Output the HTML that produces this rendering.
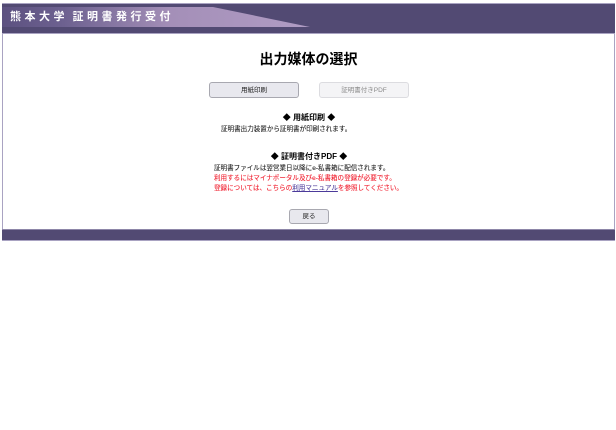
<!DOCTYPE html>
<html lang="ja">
<head>
<meta charset="utf-8">
<title>出力媒体の選択</title>
<style>
html,body{margin:0;padding:0;background:#fff;width:616px;height:430px;overflow:hidden}
body{font-family:"Liberation Sans","Noto Sans CJK JP",sans-serif;position:relative}
.a{position:absolute;white-space:nowrap}
.c{text-align:center}
.t{font-size:6.55px;line-height:10px;color:#222;-webkit-text-stroke:.1px currentColor;filter:blur(.3px)}
.btn{position:absolute;box-sizing:border-box;border-radius:3px;font-size:6.5px;text-align:center;filter:blur(.3px)}
</style>
</head>
<body>
<div class="a" style="left:2px;top:3px;width:613px;height:238px;background:#fff;box-shadow:inset 1px 0 #a9a3c2,inset -1px 0 #a9a3c2"></div>
<div class="a" style="left:2px;top:3px;width:613px;height:31px;box-sizing:border-box;background:#524a73;border-top:1px solid #a9a3c2;border-bottom:1px solid #a9a3c2"></div>
<svg class="a" style="left:2px;top:7px" width="312" height="21" viewBox="0 0 312 21">
<defs><linearGradient id="g" x1="0" x2="1" y1="0" y2="0"><stop offset="0" stop-color="#5c5180"/><stop offset=".2" stop-color="#6d6190"/><stop offset=".55" stop-color="#a48fb8"/><stop offset="1" stop-color="#b09cc4"/></linearGradient></defs>
<path d="M0 0H211L308 20H0Z" fill="url(#g)"/>
</svg>
<div class="a" style="left:10px;top:10px;font-size:11px;line-height:15px;font-weight:700;color:#fff;letter-spacing:3.5px;filter:blur(.35px)">熊本大学<span style="display:inline-block;width:4.5px"></span>証明書発行受付</div>
<div class="a c" style="left:0;width:617px;top:49px;font-size:14px;line-height:20px;font-weight:700;color:#000;filter:blur(.2px)">出力媒体の選択</div>
<div class="btn" style="left:209px;top:82px;width:90px;height:16px;line-height:15px;background:#e8e8ee;border:1px solid #a8a8b0;color:#222">用紙印刷</div>
<div class="btn" style="left:319px;top:82px;width:90px;height:16px;line-height:15px;background:#f4f4f6;border:1px solid #dcdce0;color:#8a8a8a">証明書付きPDF</div>
<div class="a c" style="left:0;width:618px;top:112px;font-size:8px;line-height:12px;font-weight:700;color:#000;filter:blur(.2px)">◆ 用紙印刷 ◆</div>
<div class="a t" style="left:221px;top:125px">証明書出力装置から証明書が印刷されます。</div>
<div class="a c" style="left:0;width:618px;top:151px;font-size:8px;line-height:12px;font-weight:700;color:#000;filter:blur(.2px)">◆ 証明書付きPDF ◆</div>
<div class="a t" style="left:214px;top:164px">証明書ファイルは翌営業日以降にe-私書箱に配信されます。</div>
<div class="a t" style="left:214px;top:174px;color:#f01c2c">利用するにはマイナポータル及びe-私書箱の登録が必要です。</div>
<div class="a t" style="left:214px;top:184px;color:#f01c2c">登録については、こちらの<span style="color:#4b3a9a;text-decoration:underline">利用マニュアル</span>を参照してください。</div>
<div class="btn" style="left:289px;top:209px;width:40px;height:15px;line-height:14px;background:#e8e8ee;border:1px solid #a8a8b0;color:#222">戻る</div>
<div class="a" style="left:2px;top:229px;width:613px;height:12px;box-sizing:border-box;background:#524a73;border-top:1px solid #8d86a8;border-bottom:1px solid #a9a3c2"></div>
</body>
</html>
